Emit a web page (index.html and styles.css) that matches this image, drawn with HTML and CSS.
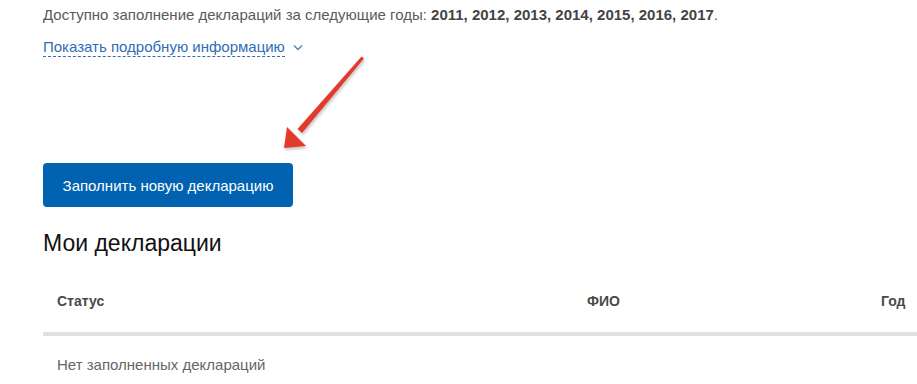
FILE: index.html
```html
<!DOCTYPE html>
<html lang="ru">

<head>
    <meta charset="UTF-8">
    <title>Мои декларации</title>
    <link rel="stylesheet" href="styles.css">
</head>

<body>

<section class="page">
    <p class="years">Доступно заполнение деклараций за следующие годы: <b>2011, 2012, 2013, 2014, 2015, 2016, 2017</b>.</p>
    <div class="more">
        <a href="#" class="more-link">Показать подробную информацию</a>
        <svg class="chevron" width="10" height="7" viewBox="0 0 10 7">
            <path d="M1 1.5 L5 5.5 L9 1.5" fill="none" stroke="#4a7fc1" stroke-width="1.3"/>
        </svg>
    </div>

    <button class="new-btn">Заполнить новую декларацию</button>

    <h2 class="title">Мои декларации</h2>

    <div class="table">
        <div class="table-head">
            <span class="col-status">Статус</span>
            <span class="col-name">ФИО</span>
            <span class="col-year">Год</span>
        </div>
        <div class="table-empty">Нет заполненных деклараций</div>
    </div>

    <!-- red pointer arrow drawn over the page -->
    <svg class="pointer" width="120" height="120" viewBox="0 0 120 120">
        <defs>
            <filter id="shadow" x="-20%" y="-20%" width="140%" height="140%">
                <feDropShadow dx="1" dy="2" stdDeviation="1.5" flood-color="#000" flood-opacity="0.25"/>
            </filter>
        </defs>
        <g filter="url(#shadow)">
            <path d="M101.5 8.5 L104 10.5 L42 85 L37.5 81 Z" fill="#e23a2f"/>
            <path d="M24 100 L27 79 L46 98 Z" fill="#e23a2f"/>
        </g>
    </svg>
</section>

</body>
</html>
```

FILE: styles.css
```css
body {
    margin: 0;
    padding: 0;
    background: #fff;
    font-family: Arial, "Liberation Sans", sans-serif;
    color: #555;
}

.page {
    position: relative;
    padding: 5px 0 0 43px;
    overflow: hidden;
    height: 379px;
}

.years {
    margin: 0;
    font-size: 15px;
    line-height: 19px;
    color: #5a5a5a;
}

.years b {
    color: #444;
}

.more {
    display: flex;
    align-items: center;
    gap: 8px;
    margin-top: 14px;
}

.more-link {
    font-size: 15px;
    line-height: 18px;
    color: #2f6db5;
    text-decoration: none;
    border-bottom: 1px dashed #2f6db5;
}

.chevron {
    margin-top: -1px;
}

.new-btn {
    display: block;
    margin-top: 106px;
    width: 250px;
    height: 44px;
    background-color: #0062b0;
    color: #fff;
    border: none;
    border-radius: 4px;
    font-family: Arial, "Liberation Sans", sans-serif;
    font-size: 15px;
    cursor: pointer;
}

.title {
    margin: 22px 0 0;
    font-size: 23px;
    font-weight: normal;
    line-height: 28px;
    color: #111;
}

.table {
    margin-top: 35px;
    margin-right: -20px;
}

.table-head {
    display: grid;
    grid-template-columns: 530px 294px auto;
    padding: 0 14px 22px;
    border-bottom: 4px solid #e1e1e1;
    font-size: 14px;
    font-weight: bold;
    line-height: 18px;
    color: #4a4a4a;
}

.table-empty {
    padding: 20px 14px 0;
    font-size: 15px;
    line-height: 18px;
    color: #666;
}

.pointer {
    position: absolute;
    left: 260px;
    top: 48px;
}
```
